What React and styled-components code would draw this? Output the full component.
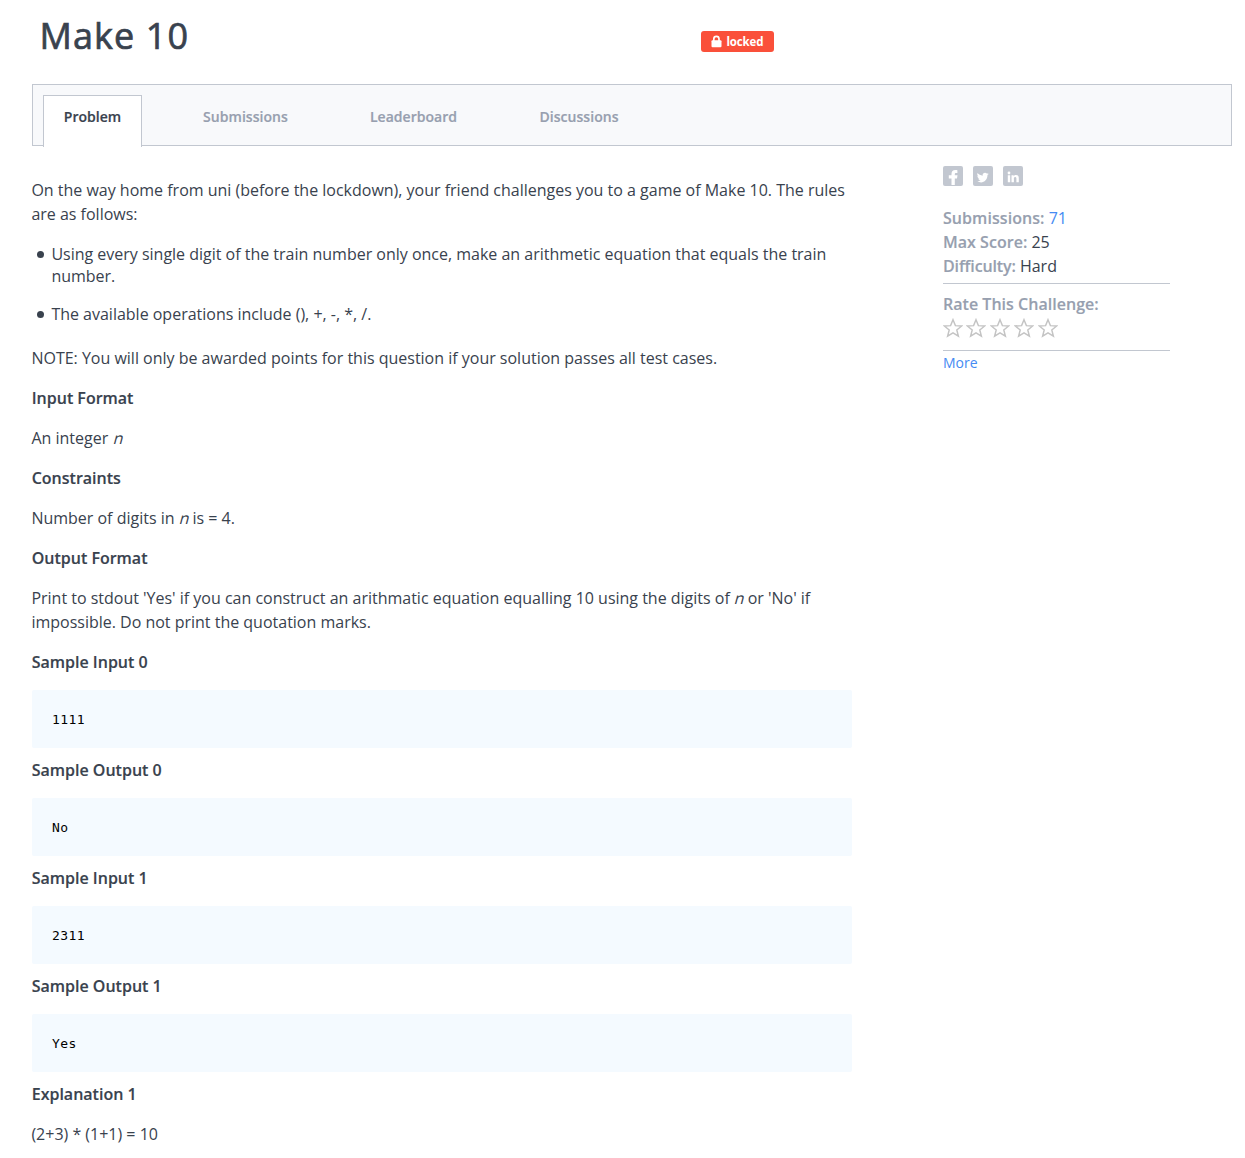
import React from "react";
import styled, { createGlobalStyle } from "styled-components";

const GlobalStyle = createGlobalStyle`
  * { box-sizing: border-box; }
  body {
    margin: 0;
    background: #fff;
    color: #39424e;
    font: 16px/24px "Open Sans", "Noto Sans", sans-serif;
  }
`;

const Page = styled.div`
  width: 1245px;
  height: 1158px;
  padding: 0 13px 0 32px;
  overflow: hidden;
`;
const Header = styled.header`
  display: flex;
  height: 84px;
  align-items: flex-start;
`;
const Title = styled.h1`
  margin: 12px 0 0;
  padding-left: 7.5px;
  width: 669px;
  font-size: 36px;
  line-height: 48px;
  font-weight: 500;
  letter-spacing: 1.1px;
  -webkit-text-stroke: 0.7px #39424e;
`;
const Badge = styled.span`
  display: flex;
  align-items: center;
  margin-top: 31px;
  width: 73px;
  height: 21px;
  padding-left: 10px;
  gap: 4.5px;
  border-radius: 3px;
  background: #fa503a;
  color: #fff;
  font-size: 11.5px;
  line-height: 21px;
  font-weight: 700;
  letter-spacing: -0.15px;
`;
const Tabs = styled.nav`
  display: flex;
  gap: 40px;
  height: 62px;
  padding: 10px 0 0 10px;
  border: 1px solid #c2c7d0;
  background: #f8f9fb;
`;
const Tab = styled.a`
  width: ${(p) => p.$width}px;
  height: ${(p) => (p.$active ? 52 : 51)}px;
  padding-top: 10px;
  border: 1px solid ${(p) => (p.$active ? "#c2c7d0" : "transparent")};
  border-bottom: 0;
  background: ${(p) => (p.$active ? "#fff" : "transparent")};
  color: ${(p) => (p.$active ? "#39424e" : "#979faf")};
  text-align: center;
  font-size: 14px;
  line-height: 22px;
  font-weight: 600;
  letter-spacing: 0.04px;
  -webkit-text-stroke: 0.2px;
  white-space: nowrap;
`;
const Columns = styled.div`
  display: flex;
  align-items: flex-start;
  gap: 91px;
`;
const Content = styled.main`
  width: 820px;
  padding-top: 32px;
`;
const Paragraph = styled.p`
  margin: 0 0 16px -0.6px;
  letter-spacing: -0.006px;
`;
const Variable = styled.em`
  display: inline-block;
  margin: 0 -1.6px 0 1.4px;
  font-style: normal;
  transform: skewX(-15deg);
`;
const Heading = styled.h2`
  margin: 0 0 16px -0.3px;
  font-size: 16px;
  line-height: 24px;
  font-weight: 600;
  letter-spacing: 0;
  -webkit-text-stroke: 0.15px;
`;
const Rules = styled.ul`
  display: flex;
  flex-direction: column;
  gap: 16px;
  margin: 17px 0 21px -0.6px;
  padding: 0;
  list-style: none;
`;
const Rule = styled.li`
  display: flex;
  line-height: 22px;
  letter-spacing: -0.008px;
  &::before {
    content: "";
    flex: none;
    width: 7px;
    height: 7px;
    margin: 8px 7.4px 0 5.6px;
    border-radius: 50%;
    background: #39424e;
  }
`;
const Code = styled.pre`
  margin: 0 0 10px;
  height: 58px;
  padding: 19px 20px;
  border-radius: 2px;
  background: #f4faff;
  color: #000;
  font: 13px/22px "DejaVu Sans Mono", monospace;
  letter-spacing: 0.4px;
`;
const Sidebar = styled.aside`
  width: 227px;
  padding-top: 20px;
`;
const Social = styled.div`
  display: flex;
  gap: 10px;
  margin-bottom: 20px;
  svg { display: block; }
`;
const Facts = styled.div`
  padding-bottom: 5px;
  border-bottom: 1px solid #c2c7d0;
`;
const Label = styled.span`
  color: #979faf;
  font-weight: 600;
  letter-spacing: ${(p) => p.$spacing || 0.03}px;
  -webkit-text-stroke: 0.15px;
`;
const Rating = styled.div`
  height: 67px;
  padding-top: 8px;
  border-bottom: 1px solid #c2c7d0;
`;
const Stars = styled.div`
  display: flex;
  gap: 3.8px;
  margin: 2px 0 0 -0.5px;
  svg { display: block; }
`;
const Link = styled.a`
  color: #458bf3;
`;
const More = styled(Link)`
  display: block;
  font-size: 14px;
  line-height: 24px;
`;

const socialMarks = {
  facebook: <path d="M8.500 19V12.500H5.800V9.200h2.700V7.900C8.500 5.300 9.900 4 12.200 4c1.100 0 2.200.2 2.200.2v2.700h-1.300c-1 0-1.300.5-1.300 1.200v1.100h2.700l-.5 3.300h-2.200V19z" />,
  twitter: <path transform="translate(-0.3 0.6)" d="M16 7.200c-.4.2-.9.3-1.400.4.5-.3.9-.8 1.100-1.300-.5.3-1 .5-1.600.6a2.500 2.500 0 0 0-4.200 2.200C7.900 9 6 8 4.900 6.500c-.7 1.200-.3 2.600.8 3.300-.4 0-.8-.1-1.100-.3 0 1.200.9 2.200 2 2.400-.4.1-.7.1-1.100 0 .3 1 1.200 1.700 2.300 1.700A5 5 0 0 1 4.600 14.700c4.800 3 10.200-.3 10.200-6.200.5-.3.900-.8 1.200-1.300z" />,
  linkedin: (
    <g>
      <circle cx="6" cy="7" r="1.4" />
      <path d="M4.800 9.200h2.400v7.100H4.800zM8.500 9.200h2.200v1c.4-.7 1.200-1.200 2.300-1.200 2.400 0 2.800 1.500 2.800 3.400v3.900h-2.400v-3.400c0-.8 0-1.900-1.200-1.900s-1.300.9-1.300 1.800v3.500H8.500z" />
    </g>
  ),
};

function SocialIcon({ name }) {
  return (
    <svg width="20" height="20" viewBox="0 0 20 20" fill="#fff">
      <rect width="20" height="20" rx="2" fill="#c2c7d0" />
      {socialMarks[name]}
    </svg>
  );
}

function Star() {
  return (
    <svg width="20" height="20" viewBox="0 0 20 20" fill="none" stroke="#c4c4c4" strokeWidth="1.45">
      <path d="M10 1.700l2.400 5.900 6.300.4-4.900 4 1.600 6.200-5.400-3.400-5.400 3.400 1.600-6.200-4.900-4 6.300-.4z" />
    </svg>
  );
}

function Lock() {
  return (
    <svg width="11" height="13" viewBox="0 0 11 13">
      <path d="M2.800 6V4a2.600 2.600 0 0 1 5.200 0v2" fill="none" stroke="#fff" strokeWidth="1.700" />
      <rect x="0.500" y="5.300" width="10" height="7" rx="1" fill="#fff" />
    </svg>
  );
}

const tabs = [
  { name: "Problem", width: 99, active: true },
  { name: "Submissions", width: 127 },
  { name: "Leaderboard", width: 129 },
  { name: "Discussions", width: 122 },
];

const samples = [
  ["Sample Input 0", "1111"],
  ["Sample Output 0", "No"],
  ["Sample Input 1", "2311"],
  ["Sample Output 1", "Yes"],
];

export default function App() {
  return (
    <Page>
      <GlobalStyle />
      <Header>
        <Title>Make 10</Title>
        <Badge><Lock />locked</Badge>
      </Header>
      <Tabs>
        {tabs.map((t) => (
          <Tab key={t.name} $width={t.width} $active={t.active}>{t.name}</Tab>
        ))}
      </Tabs>
      <Columns>
        <Content>
          <Paragraph>On the way home from uni (before the lockdown), your friend challenges you to a game of Make 10. The rules are as follows:</Paragraph>
          <Rules>
            <Rule>Using every single digit of the train number only once, make an arithmetic equation that equals the train number.</Rule>
            <Rule>The available operations include (), +, -, *, /.</Rule>
          </Rules>
          <Paragraph>NOTE: You will only be awarded points for this question if your solution passes all test cases.</Paragraph>
          <Heading>Input Format</Heading>
          <Paragraph>An integer <Variable>n</Variable></Paragraph>
          <Heading>Constraints</Heading>
          <Paragraph>Number of digits in <Variable>n</Variable> is = 4.</Paragraph>
          <Heading>Output Format</Heading>
          <Paragraph>Print to stdout 'Yes' if you can construct an arithmatic equation equalling 10 using the digits of <Variable>n</Variable> or 'No' if impossible. Do not print the quotation marks.</Paragraph>
          {samples.map(([title, value]) => (
            <React.Fragment key={title}>
              <Heading>{title}</Heading>
              <Code>{value}</Code>
            </React.Fragment>
          ))}
          <Heading>Explanation 1</Heading>
          <Paragraph>(2+3) * (1+1) = 10</Paragraph>
        </Content>
        <Sidebar>
          <Social>
            <SocialIcon name="facebook" />
            <SocialIcon name="twitter" />
            <SocialIcon name="linkedin" />
          </Social>
          <Facts>
            <div><Label $spacing={0.06}>Submissions:</Label> <Link>71</Link></div>
            <div><Label>Max Score:</Label> 25</div>
            <div><Label $spacing={-0.12}>Difficulty:</Label> Hard</div>
          </Facts>
          <Rating>
            <Label>Rate This Challenge:</Label>
            <Stars>{[1, 2, 3, 4, 5].map((n) => <Star key={n} />)}</Stars>
          </Rating>
          <More>More</More>
        </Sidebar>
      </Columns>
    </Page>
  );
}
